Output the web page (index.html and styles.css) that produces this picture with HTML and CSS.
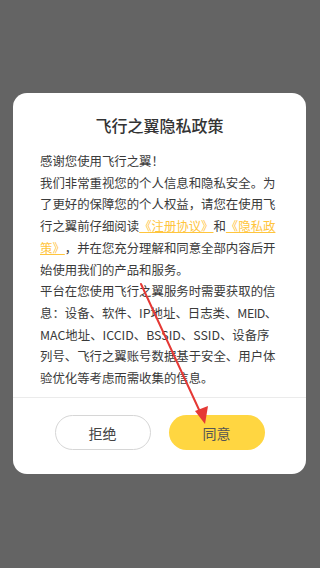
FILE: index.html
```html
<!DOCTYPE html>
<html lang="zh-CN">
<head>
<meta charset="utf-8">
<meta name="viewport" content="width=device-width, initial-scale=1">
<title>飞行之翼隐私政策</title>
<link rel="stylesheet" href="styles.css">
</head>
<body>
<div class="overlay">
  <div class="dialog">
    <h1 class="title">飞行之翼隐私政策</h1>
    <div class="content">
      <p>感谢您使用飞行之翼！</p>
      <p>我们非常重视您的个人信息和隐私安全。为了更好的保障您的个人权益，请您在使用飞行之翼前仔细阅读<a class="link" href="#">《注册协议》</a>和<a class="link" href="#">《隐私政策》</a>，并在您充分理解和同意全部内容后开始使用我们的产品和服务。</p>
      <p>平台在您使用飞行之翼服务时需要获取的信息：设备、软件、IP地址、日志类、<span class="en">MEID</span>、MAC地址、ICCID、BSSID、SSID、设备序列号、飞行之翼账号数据基于安全、用户体验优化等考虑而需收集的信息。</p>
    </div>
    <div class="divider"></div>
    <div class="actions">
      <button class="btn btn-reject">拒绝</button>
      <button class="btn btn-agree">同意</button>
    </div>
  </div>
</div>
<svg class="annotation" width="320" height="568" viewBox="0 0 320 568" aria-hidden="true">
  <line x1="141" y1="284" x2="201" y2="414" stroke="#e53935" stroke-width="2" stroke-linecap="round"/>
  <polygon points="205,424 195,411 208,406" fill="#e53935"/>
</svg>
</body>
</html>
```
FILE: styles.css
```css
* { box-sizing: border-box; }
html, body {
  margin: 0;
  padding: 0;
  width: 320px;
  height: 568px;
  overflow: hidden;
  background: #646464;
  font-family: "Noto Sans CJK SC", sans-serif;
}
.overlay {
  height: 568px;
  padding: 93px 14px 0 13px;
}
.dialog {
  background: #fff;
  border-radius: 14px;
  width: 293px;
  height: 381px;
  display: flex;
  flex-direction: column;
}
.title {
  margin: 0;
  padding-top: 21px;
  font-size: 16px;
  line-height: 22px;
  font-weight: 500;
  color: #333;
  text-align: center;
}
.content {
  margin: 15px 28px 0 27px;
  height: 233px;
  overflow: hidden;
  font-size: 12.4px;
  line-height: 21.7px;
  color: #3a3a3a;
  text-spacing-trim: space-all;
}
.content p { margin: 0; }
.en { letter-spacing: -0.5px; }
.link {
  color: #ffc53d;
  text-decoration: underline;
  text-decoration-color: #ffc53d;
}
.divider {
  margin-top: 13px;
  height: 1px;
  background: #ebebeb;
}
.actions {
  display: flex;
  justify-content: center;
  gap: 18px;
  padding-top: 17px;
}
.btn {
  width: 96px;
  height: 35px;
  border-radius: 18px;
  font-family: "Noto Sans CJK SC", sans-serif;
  font-size: 14px;
  color: #444;
  padding: 0;
}
.btn-reject {
  background: #fff;
  border: 1px solid #d6d6d6;
}
.btn-agree {
  background: #ffd641;
  border: none;
  color: #555;
}
.annotation {
  position: absolute;
  left: 0;
  top: 0;
  pointer-events: none;
}
```
